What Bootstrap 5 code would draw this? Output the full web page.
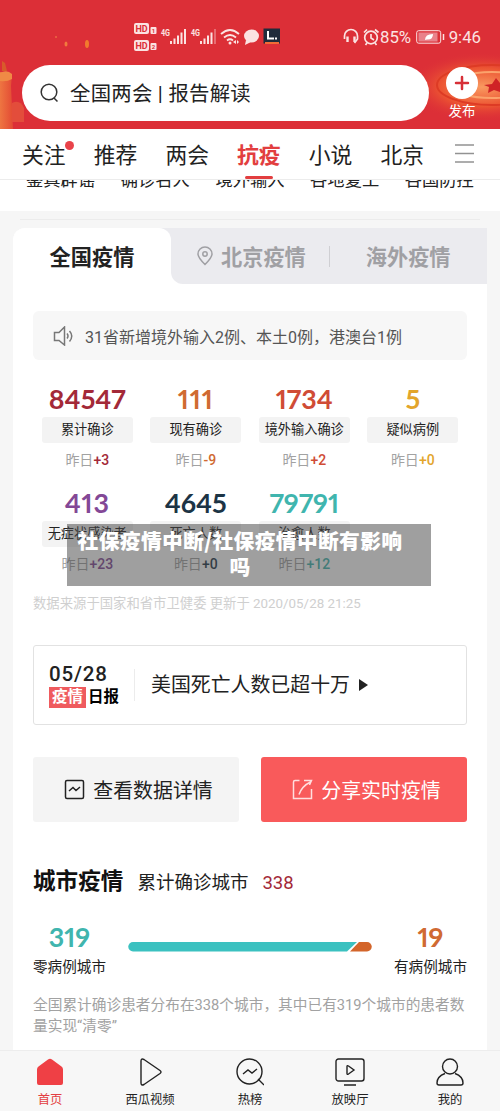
<!DOCTYPE html>
<html lang="zh-CN">
<head>
<meta charset="utf-8">
<meta name="viewport" content="width=device-width, initial-scale=1">
<title>抗疫</title>
<link href="https://cdn.jsdelivr.net/npm/bootstrap@5.3.0/dist/css/bootstrap.min.css" rel="stylesheet">
<style>
body{font-family:Roboto,"Noto Sans CJK SC",sans-serif;background:#f6f6f6;color:#222;width:500px;height:1111px;overflow:hidden;line-height:1.2}
svg{display:block;flex:none}
.top{height:129px;background:#dc2f37;color:#fff;overflow:hidden}
.decor{left:0;top:0}
.status{height:65px;padding:9px 19px 0 134px}
.clock{font-size:16.8px;color:#fbe3e2}
.search{width:407px;height:56px;margin-left:22px;border-radius:28px;background:#fff;color:#222;font-size:20.4px;padding-left:18px}
.search span{margin-left:11px;padding-top:2px;letter-spacing:.25px}
.post{width:66px;font-size:13.5px}
.channels{height:51px;background:#fff;border-bottom:1px solid #ececec;padding:4px 0 0 22px;font-size:21.8px}
.channels>div{width:71.7px;white-space:nowrap}
.channels .now{color:#e23e3f;font-weight:700}
.newdot{width:9px;height:9px;left:43px;top:-2px;background:#e9434a}
.underbar{width:28px;height:3px;left:8px;top:33px;background:#e23e3f}
.shortcuts{height:31px;background:#fff;overflow:hidden;padding-left:26px;font-size:17.3px}
.shortcuts>div{width:94.7px;height:10px;overflow:hidden;white-space:nowrap}
.shortcuts span{display:block;line-height:20px;margin-top:-10px}
.gap-strip{height:17px;padding:8px 20px 0}
.gap-strip div{height:1px;background:#ececec}
.panel{width:474px;height:822px;margin-left:13px;background:#fff;border-radius:12px 0 0 0}
.areas{height:56px;font-size:21.2px;font-weight:700;background:#ebebef;color:#a0a0a4;border-radius:14px 0 0 0}
.areas .on{width:158px;height:56px;background:#fff;color:#222;border-radius:12px 12px 0 0;padding-top:4px}
.areas .off{width:316px;height:56px;background:#ebebef;border-radius:0 0 0 12px}
.areas .off span{padding-top:4px}
.areas .offwrap{background:linear-gradient(#ebebef 50%,#fff 50%)}
.inner{padding:27px 20px 0}
.notice{height:49px;background:#f7f7f7;border-radius:6px;font-size:16px;color:#555;padding-left:20px}
.notice span{margin-left:11px;padding-top:4px}
.stats{height:231px;padding-top:23px}
.stat{height:104px;width:108.5px;text-align:center}
.num{font-family:Lato,sans-serif;font-weight:700;font-size:26.8px;line-height:32px;height:34px;font-feature-settings:"pnum"}
.num.wide{letter-spacing:.9px}
.label{width:91px;height:26px;line-height:25px;background:#f3f3f3;border-radius:3px;font-size:13.2px;margin:0 auto}
.day{font-size:14px;color:#a2a2a2;line-height:17px;margin-top:9px}
.day b{font-weight:500}
.source{font-size:13.35px;line-height:16px;height:32px;padding-top:5px;color:#cfcfcf;white-space:nowrap}
.banner{left:67px;top:524px;width:364px;height:62px;background:rgba(70,70,70,.52);color:#fff;font-family:"Noto Sans CJK SC",sans-serif;font-size:20.8px;font-weight:900;letter-spacing:.3px;line-height:26px;padding:3px 28px 0 10px;text-align:center;white-space:nowrap}
.daily{height:80px;border:1px solid #e2e2e2;border-radius:3px;padding-left:15px}
.daily .headline{font-size:19.9px;padding-top:2px;margin-left:-1px}
.date{font-size:20.5px;font-weight:500;line-height:25px;letter-spacing:.8px}
.tag{font-size:15.5px;font-weight:700;line-height:21px;color:#000}
.tag span{display:inline-block;height:21px;background:#ef5b5e;color:#fff;padding:0 3px;margin-right:2px}
.split{width:1px;height:32px;background:#ececec;margin-left:15px;margin-right:17px}
.act{width:206px;height:65px;border-radius:3px;border:0;font-size:19.9px;padding:0 0 0 5px;display:flex;align-items:center;justify-content:center;background:#f4f4f4;color:#222}
.act span{padding-top:4px}
.act.share{background:#f95a5b;color:#fff}
.city{margin-top:45px;height:30px}
.big{font-size:22.6px;font-weight:700;color:#111}
.bars{height:54px;margin-top:24px}
.bars .side{width:73px;text-align:center;font-size:14.6px;white-space:nowrap}
.bars .num{height:38px;line-height:33px}
.note{font-size:14.7px;line-height:21px;color:#a2a2a2;margin-top:20px;white-space:nowrap}
.dock{height:61px;background:#f7f7f7;border-top:1px solid #ededed;font-size:12.3px;padding-top:7px}
.dock>div{width:100px}
.dock svg+div{padding-top:7px}
</style>
</head>
<body class="position-relative">
<header class="top position-relative">
<svg class="decor position-absolute" width="500" height="129" viewBox="0 0 500 129">
<defs><radialGradient id="glow"><stop offset="0" stop-color="#f99a60"/><stop offset=".55" stop-color="#ec5432"/><stop offset="1" stop-color="#dc2f37" stop-opacity="0"/></radialGradient>
<linearGradient id="stone"><stop stop-color="#ee7541"/><stop offset="1" stop-color="#e34a34"/></linearGradient></defs>
<ellipse cx="482" cy="87" rx="76" ry="35" fill="url(#glow)"/>
<g fill="none" stroke="#dd3b25" stroke-width="2"><ellipse cx="492" cy="85" rx="55" ry="20"/><ellipse cx="492" cy="85" rx="40" ry="13" stroke="#fba36c"/></g>
<path d="M484 85l8-1 4-6 4 5v9l-6-2-6 3 1-6z" fill="#cf2326"/>
<path d="M0 72h8l4 3-1 11 2 43H0z" fill="url(#stone)"/><path d="M0 73q7-4 12 1v5q-5 3-12 2z" fill="#f08a45"/><path d="M2 61l3 2 2 8H2z" fill="#d85b2b"/>
<path d="M12 103q8-4 12 5v14H12z" fill="#e34d3b"/>
<ellipse cx="87" cy="44" rx="2" ry="4" fill="#f27a2d"/><ellipse cx="66" cy="44" rx="1.500" ry="2.500" fill="#f27a3d"/><circle cx="56" cy="37" r="1" fill="#ec6a43"/>
</svg>
<div class="status position-relative d-flex align-items-center">
<svg width="148" height="34" viewBox="134 20 148 34" fill="#fbe3e2" font-family="Roboto,sans-serif" font-weight="700">
<rect x="134" y="23" width="15" height="11" rx="2"/><rect x="134" y="40" width="15" height="11" rx="2"/><rect x="150.500" y="27" width="6" height="7" rx="1"/><rect x="150.500" y="43" width="6" height="7" rx="1"/>
<g fill="#dc2f37"><text x="135.500" y="32" font-size="9">HD</text><text x="135.500" y="49" font-size="9">HD</text><text x="151.800" y="33" font-size="6">1</text><text x="151.800" y="49" font-size="6">2</text></g>
<text x="161" y="36" font-size="8.500" textLength="9" lengthAdjust="spacingAndGlyphs">4G</text><text x="191" y="36" font-size="8.500" textLength="9" lengthAdjust="spacingAndGlyphs">4G</text>
<path d="M170 41h2v3h-2zM173.500 38.500h2V44h-2zM177 35.500h2V44h-2zM180.500 32.500h2V44h-2zM184 29h2v15h-2z"/>
<path d="M200 41h2v3h-2zM203.500 38.500h2V44h-2zM207 35.500h2V44h-2zM210.500 32.500h2V44h-2z"/><path d="M214 29h2v15h-2z" opacity=".35"/>
<g fill="none" stroke="#fbe3e2" stroke-width="1.800"><path d="M221 34q9-8 18 0M224 37.500q6-5 12 0M227 40.500q3-2.500 6 0"/></g><circle cx="230" cy="43" r="1.500"/><path d="M233 42l3-2v4zM237 40l2 2-2 2z"/>
<ellipse cx="251.500" cy="36" rx="7.500" ry="6.500"/><path d="M246 40l-1 5 6-3z"/>
<rect x="263.500" y="28.500" width="16.500" height="15" fill="#202b3b"/><path d="M267 31h2v6.500h5v2h-7zM275 37.500h2v2h-2z" fill="#fff"/><path d="M265 42h14v2h-14z" fill="#f26b36"/>
</svg>
<svg style="margin-left:60px" width="38" height="18" viewBox="341 28 38 18" fill="none" stroke="#fbe3e2" stroke-width="1.700"><path d="M343.500 39v-3a6.500 6.500 0 0 1 13 0v3l-3 4"/><path d="M346.500 36.500V42M353.500 36.500V42" stroke-width="2.400"/><circle cx="370" cy="37.500" r="6.300"/><path d="M370 34v4l3 2M363 32.500l3-3M374 29.500l3.500 3M366 43l-1.500 2M374 43l1.500 2"/></svg>
<span class="clock">85%</span>
<svg class="ms-auto" width="29" height="16" viewBox="0 0 29 16"><rect x=".7" y="1.700" width="24" height="12.500" rx="2" fill="none" stroke="#fbe3e2"/><rect x="2.500" y="3.500" width="19" height="9" fill="#e9818a"/><path d="M9 11q0-6 8-6 0 6-6 5.500z" fill="#fff"/><path d="M27.500 5v6" stroke="#fbe3e2" stroke-width="1.500"/></svg>
<span class="clock ms-1">9:46</span>
</div>
<div class="d-flex position-relative">
<div class="search d-flex align-items-center"><svg width="19" height="20" viewBox="0 0 19 20" fill="none" stroke="#333" stroke-width="1.500"><circle cx="9" cy="9" r="7.800"/><path d="M14 15l3.500 3.500"/></svg><span>全国两会 | 报告解读</span></div>
<div class="post text-center"><svg class="mx-auto" style="margin-top:2px" width="32" height="32"><circle cx="16" cy="16" r="16" fill="#fff"/><path d="M16 10v12M10 16h12" stroke="#d72f37" stroke-width="2.500" stroke-linecap="round"/></svg><div style="margin-top:4px">发布</div></div>
</div>
</header>
<nav class="channels d-flex align-items-center">
<div class="position-relative">关注<i class="newdot position-absolute rounded-circle"></i></div><div>推荐</div><div>两会</div><div class="now position-relative">抗疫<i class="underbar position-absolute rounded-pill"></i></div><div>小说</div><div>北京</div>
<svg width="22" height="24" viewBox="0 0 22 24" stroke="#929292" stroke-width="1.600"><path d="M3 1h19M3 9.500h19M3 18h19"/></svg>
</nav>
<div class="shortcuts d-flex"><div><span>鉴真辟谣</span></div><div><span>确诊名人</span></div><div><span>境外输入</span></div><div><span>各地复工</span></div><div><span>各国防控</span></div></div>
<div class="gap-strip"><div></div></div>
<main class="panel">
<div class="areas d-flex"><div class="on d-flex align-items-center justify-content-center">全国疫情</div>
<div class="offwrap"><div class="off d-flex align-items-center"><svg style="margin-left:26px" width="16" height="20" viewBox="0 0 16 20" fill="none" stroke="#a0a0a4" stroke-width="1.500"><path d="M8 18.500C4 14.500 1 11.500 1 8a7 7 0 0 1 14 0c0 3.500-3 6.500-7 10.500z"/><circle cx="8" cy="8" r="2.200"/></svg><span style="margin-left:8px">北京疫情</span><i style="width:1px;height:21px;background:#cfcfd3;margin-left:23px"></i><span style="margin-left:36px">海外疫情</span></div></div></div>
<div class="inner">
<div class="notice d-flex align-items-center"><svg width="21" height="20" viewBox="0 0 21 20" fill="none" stroke="#777" stroke-width="1.500"><path d="M1.500 6.500H6L11.500 1v18L6 14.500H1.500zM14 7.500q2 2.500 0 5M16.500 5q4.500 5 0 10.500"/></svg><span>31省新增境外输入2例、本土0例，港澳台1例</span></div>
<section class="stats d-flex flex-wrap">
<div class="stat"><div class="num" style="color:#a32938">84547</div><div class="label">累计确诊</div><div class="day">昨日<b style="color:#a32938">+3</b></div></div>
<div class="stat"><div class="num wide" style="color:#d06a32">111</div><div class="label">现有确诊</div><div class="day">昨日<b style="color:#d06a32">-9</b></div></div>
<div class="stat"><div class="num" style="color:#d04c36">1734</div><div class="label">境外输入确诊</div><div class="day">昨日<b style="color:#d04c36">+2</b></div></div>
<div class="stat"><div class="num" style="color:#e3a52c">5</div><div class="label">疑似病例</div><div class="day">昨日<b style="color:#e3a52c">+0</b></div></div>
<div class="stat"><div class="num wide" style="color:#834896">413</div><div class="label">无症状感染者</div><div class="day">昨日<b style="color:#834896">+23</b></div></div>
<div class="stat"><div class="num" style="color:#1c3445">4645</div><div class="label">死亡人数</div><div class="day">昨日<b style="color:#1c3445">+0</b></div></div>
<div class="stat"><div class="num" style="color:#40b5ae">79791</div><div class="label">治愈人数</div><div class="day">昨日<b style="color:#40b5ae">+12</b></div></div>
</section>
<div class="source">数据来源于国家和省市卫健委 更新于 2020/05/28 21:25</div>
<section class="daily d-flex align-items-center" style="margin-top:22px"><div><div class="date">05/28</div><div class="tag"><span>疫情</span>日报</div></div><div class="split"></div><span class="headline">美国死亡人数已超十万</span><svg style="margin-left:9px" width="9" height="12"><path d="M0 0l9 6-9 6z" fill="#222"/></svg></section>
<div class="d-flex justify-content-between" style="margin-top:32px">
<button class="act"><svg class="me-2" width="21" height="21" viewBox="0 0 21 21" fill="none" stroke="#222" stroke-width="1.500"><rect x="1.500" y="1.500" width="18" height="18" rx="1.500"/><path d="M5 12l4-3.500 3 3L16 8"/></svg><span>查看数据详情</span></button>
<button class="act share"><svg class="me-2" width="21" height="21" viewBox="0 0 21 21" fill="none" stroke="#ffdede" stroke-width="1.500"><path d="M7.500 1.500H3Q1.500 1.500 1.500 3v16.500h18V10M7 15.500Q10 7 18.500 3M12 1.500h7.500L17.500 6"/></svg><span>分享实时疫情</span></button></div>
<div class="city d-flex align-items-center"><span class="big">城市疫情</span><span style="font-size:18.5px;margin-left:14px;padding-top:2px">累计确诊城市</span><span style="font-size:18.5px;margin-left:14px;padding-top:2px;color:#a32938">338</span></div>
<div class="bars d-flex"><div class="side"><div class="num" style="color:#40b5ae">319</div>零病例城市</div>
<svg style="margin:21px 22px 0" width="244" height="10"><path d="M5 0H229L219 9.500H5A4.750 4.750 0 0 1 5 0z" fill="#3bc1c0"/><path d="M231 0H239a4.750 4.750 0 0 1 0 9.500H222z" fill="#d3652a"/></svg>
<div class="side"><div class="num" style="color:#d06a32">19</div>有病例城市</div></div>
<div class="note">全国累计确诊患者分布在338个城市，其中已有319个城市的患者数<br>量实现“清零”</div>
</div></main>
<footer class="dock d-flex text-center">
<div style="color:#e33e42"><svg class="mx-auto" width="28" height="28" viewBox="0 0 28 28"><path d="M12 1.500q2-1.500 4 0l9.500 7q1.500 1 1.500 3V25q0 2-2 2H3q-2 0-2-2V11.500q0-2 1.500-3z" fill="#ef4045"/></svg><div>首页</div></div>
<div><svg class="mx-auto" width="28" height="28" viewBox="0 0 28 28" fill="none" stroke="#222" stroke-width="1.400"><path d="M5 3q0-3 3-1.500l16 11q2 1.500 0 3L8 26.500Q5 28 5 25z"/></svg><div>西瓜视频</div></div>
<div><svg class="mx-auto" width="28" height="28" viewBox="0 0 28 28" fill="none" stroke="#222" stroke-width="1.400"><circle cx="13.500" cy="13.500" r="12.500"/><path d="M22 21l6 6M7 16l5-4 4 3 5-4"/></svg><div>热榜</div></div>
<div><svg class="mx-auto" width="30" height="28" viewBox="0 0 30 28" fill="none" stroke="#222" stroke-width="1.400"><rect x="1" y="1" width="28" height="22" rx="2.500"/><path d="M12 8.500q0-1.500 1.500-.5l5.500 4-5.500 4q-1.500 1-1.500-.5zM9 27h12"/></svg><div>放映厅</div></div>
<div><svg class="mx-auto" width="28" height="28" viewBox="0 0 28 28" fill="none" stroke="#222" stroke-width="1.400"><circle cx="14" cy="8.500" r="7.500"/><path d="M9 15.500q-8 3-8 9.500 0 2 2 2h22q2 0 2-2 0-6.500-8-9.500"/></svg><div>我的</div></div>
</footer>
<div class="banner position-absolute">社保疫情中断/社保疫情中断有影响<br>吗</div>
<script src="https://cdn.jsdelivr.net/npm/bootstrap@5.3.0/dist/js/bootstrap.bundle.min.js"></script>
</body>
</html>
